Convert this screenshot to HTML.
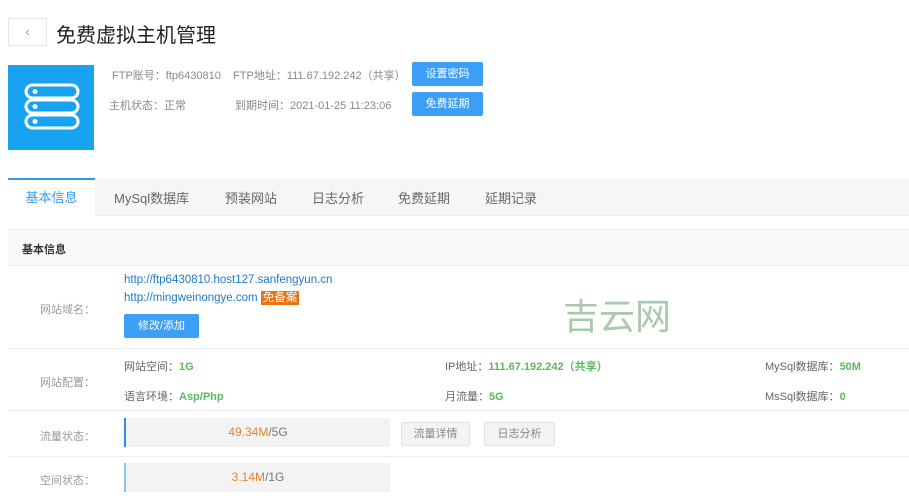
<!DOCTYPE html><html><head><meta charset="utf-8"><style>
*{margin:0;padding:0;box-sizing:border-box}
body{width:909px;height:500px;background:#fff;font-family:"Liberation Sans","Noto Sans CJK SC",sans-serif;position:relative;overflow:hidden;color:#666}
.a{position:absolute;white-space:nowrap}
.btn{position:absolute;background:#3d9ef5;color:#fff;font-size:11px;text-align:center;border-radius:2px}
.g{color:#5cb85c;font-weight:bold}
.line{position:absolute;left:8px;right:0;height:1px;background:#eceef1}
.lab{position:absolute;font-size:11px;color:#999;left:40px}
.t{font-size:11px;color:#666}
.gb{position:absolute;background:#f3f3f3;border:1px solid #e2e2e2;color:#888;font-size:11px;text-align:center;border-radius:2px;height:24px;line-height:22px}
.bar{position:absolute;left:124px;width:266px;height:29px;background:#f3f3f3;border-left:2px solid #2d8cf0;font-size:12px;color:#777;text-align:center;line-height:29px}
.tab{position:absolute;top:188px;font-size:13px;color:#666}
</style></head><body>
<div class="a" style="left:8px;top:18px;width:39px;height:28px;border:1px solid #e6e6e6;text-align:center;line-height:26px;color:#999;font-size:13px">‹</div>
<div class="a" style="left:56px;top:19px;font-size:20px;color:#222">免费虚拟主机管理</div>
<div class="a" style="left:8px;top:65px;width:86px;height:85px;background:#18a3f2">
<svg width="86" height="85" viewBox="0 0 86 85"><g fill="none" stroke="#fff" stroke-width="3"><rect x="18" y="20" width="52" height="13" rx="6.5"/><rect x="18" y="35" width="52" height="13" rx="6.5"/><rect x="18" y="50" width="52" height="13" rx="6.5"/></g><g fill="#fff"><circle cx="27" cy="26.5" r="2.5"/><circle cx="27" cy="41.5" r="2.5"/><circle cx="27" cy="56.5" r="2.5"/></g></svg></div>
<div class="a t" style="left:112px;top:67px;color:#888">FTP账号：ftp6430810&nbsp;&nbsp;&nbsp;&nbsp;FTP地址：111.67.192.242（共享）</div>
<div class="a t" style="left:109px;top:97px;color:#888">主机状态：正常</div>
<div class="a t" style="left:235px;top:97px;color:#888">到期时间：2021-01-25 11:23:06</div>
<div class="btn" style="left:412px;top:62px;width:71px;height:24px;line-height:24px">设置密码</div>
<div class="btn" style="left:412px;top:92px;width:71px;height:24px;line-height:24px">免费延期</div>
<div class="a" style="left:8px;top:178px;right:0;height:38px;background:#f5f6f8;border-bottom:1px solid #eceef1"></div>
<div class="a" style="left:8px;top:178px;width:87px;height:39px;background:#fff;border-top:2px solid #2d9cf0;color:#3a9af0;font-size:13px;text-align:center;line-height:36px">基本信息</div>
<div class="tab" style="left:114px">MySql数据库</div>
<div class="tab" style="left:225px">预装网站</div>
<div class="tab" style="left:312px">日志分析</div>
<div class="tab" style="left:398px">免费延期</div>
<div class="tab" style="left:485px">延期记录</div>
<div class="a" style="left:8px;top:229px;right:0;height:37px;background:#f7f8fa;border-top:1px solid #eceef1;border-bottom:1px solid #eceef1"></div>
<div class="a" style="left:22px;top:241px;font-size:11px;font-weight:bold;color:#333">基本信息</div>
<div class="a" style="left:124px;top:274px;font-size:11.5px;color:#1a7ad0">http://ftp6430810.host127.sanfengyun.cn</div>
<div class="a" style="left:124px;top:289px;font-size:11.5px;color:#1a7ad0">http://mingweinongye.com <span style="background:#e8730f;color:#fff;padding:1px 2px">免备案</span></div>
<div class="btn" style="left:124px;top:314px;width:75px;height:24px;line-height:24px">修改/添加</div>
<div class="a" style="left:563px;top:288px;font-size:36px;color:#a9c8ae">吉云网</div>
<div class="lab" style="top:301px">网站域名：</div>
<div class="line" style="top:348px"></div>
<div class="lab" style="top:374px">网站配置：</div>
<div class="a t" style="left:124px;top:358px">网站空间：<span class="g">1G</span></div>
<div class="a t" style="left:445px;top:358px">IP地址：<span class="g">111.67.192.242（共享）</span></div>
<div class="a t" style="left:765px;top:358px">MySql数据库：<span class="g">50M</span></div>
<div class="a t" style="left:124px;top:388px">语言环境：<span class="g">Asp/Php</span></div>
<div class="a t" style="left:445px;top:388px">月流量：<span class="g">5G</span></div>
<div class="a t" style="left:765px;top:388px">MsSql数据库：<span class="g">0</span></div>
<div class="line" style="top:410px"></div>
<div class="lab" style="top:428px">流量状态：</div>
<div class="bar" style="top:418px"><span style="color:#e8842a">49.34M</span>/5G</div>
<div class="gb" style="left:401px;top:422px;width:69px">流量详情</div>
<div class="gb" style="left:484px;top:422px;width:71px">日志分析</div>
<div class="line" style="top:456px"></div>
<div class="lab" style="top:472px">空间状态：</div>
<div class="bar" style="top:463px;border-left-color:#8cc8f5"><span style="color:#e8842a">3.14M</span>/1G</div>
</body></html>
